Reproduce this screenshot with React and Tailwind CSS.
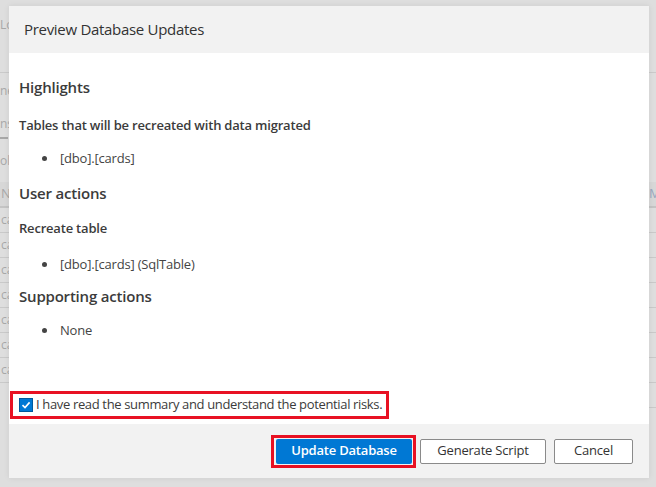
import React from "react";

const font = { fontFamily: '"Open Sans", "Noto Sans", sans-serif' };

function BgRow({ text, right }) {
  return (
    <div className="h-[25px] border-b border-[#c9c9c9] flex items-center justify-between text-[12px] text-[#a8a8a8]">
      <span className="w-[9px] overflow-hidden whitespace-nowrap pl-[1px]">{text}</span>
      <span className="w-[7px] overflow-hidden whitespace-nowrap">{right}</span>
    </div>
  );
}

export default function App() {
  return (
    <div className="relative w-[656px] h-[487px] overflow-hidden bg-[#dedede]" style={font}>
      {/* faded underlying page */}
      <div className="flex flex-col text-[#a8a8a8] text-[12px]">
        <div className="h-[73px] border-b border-[#cacaca] flex items-start pt-[16px]">
          <span className="w-[9px] overflow-hidden whitespace-nowrap">Lo</span>
        </div>
        <div className="h-[38px] flex items-center">
          <span className="w-[9px] overflow-hidden whitespace-nowrap -mt-[2px]">ne</span>
        </div>
        <div className="h-[26px] flex items-center">
          <span className="w-[9px] overflow-hidden whitespace-nowrap">ns</span>
        </div>
        <div className="h-[2px] w-[8px] bg-[#a8a8a8]"></div>
        <div className="h-[43px] flex items-center">
          <span className="w-[9px] overflow-hidden whitespace-nowrap">olu</span>
        </div>
        <div className="h-[26px] bg-[#d7d7d7] border-b-2 border-[#c4c4c4] flex items-center justify-between text-[13px]">
          <span className="w-[9px] overflow-hidden pl-[1px]">N</span>
          <span className="w-[7px] overflow-hidden whitespace-nowrap text-[#9aa8c0]">Ma</span>
        </div>
        <BgRow text="ca" />
        <BgRow text="ca" />
        <BgRow text="ca" />
        <BgRow text="ca" />
        <BgRow text="ca" />
        <BgRow text="ca" />
        <BgRow text="ca" />
        <div className="h-[25px] border-b border-[#c9c9c9] ml-[640px]"></div>
      </div>

      {/* dialog */}
      <div className="absolute left-[9px] top-[6px] w-[640px] h-[472px] bg-white flex flex-col shadow-[0_0_6px_rgba(0,0,0,0.08)]">
        <div className="h-[47px] bg-[#f2f2f2] flex items-center pl-[15px] text-[15px] text-[#333333] tracking-[-0.3px]">
          Preview Database Updates
        </div>
        <div className="flex-1 flex flex-col pl-[10px] pr-[10px] text-[#3b3b3b] tracking-[-0.2px]">
          <div className="mt-[24px] text-[15px] font-semibold leading-[20px]">Highlights</div>
          <div className="mt-[19px] text-[13px] font-semibold leading-[18px]">Tables that will be recreated with data migrated</div>
          <ul className="mt-[15px] ml-[39px] list-disc text-[13px] leading-[18px] text-[#444444]">
            <li className="pl-[2px]">[dbo].[cards]</li>
          </ul>
          <div className="mt-[16px] text-[15px] font-semibold leading-[20px]">User actions</div>
          <div className="mt-[16px] text-[13px] font-semibold leading-[18px]">Recreate table</div>
          <ul className="mt-[18px] ml-[39px] list-disc text-[13px] leading-[18px] text-[#444444]">
            <li className="pl-[2px]">[dbo].[cards] (SqlTable)</li>
          </ul>
          <div className="mt-[13px] text-[15px] font-semibold leading-[20px]">Supporting actions</div>
          <ul className="mt-[15px] ml-[39px] list-disc text-[13px] leading-[18px] text-[#444444]">
            <li className="pl-[2px]">None</li>
          </ul>
          <div className="flex-1"></div>
          <div className="mb-[5px] -ml-[9px] self-start h-[28px] border-[3px] border-[#e81123] flex items-center pl-[6px] pr-[4px] gap-[3px]">
            <span className="w-[14px] h-[14px] bg-[#0078d4] border border-[#005a9e] outline outline-1 outline-white flex items-center justify-center">
              <svg width="10" height="10" viewBox="0 0 10 10">
                <path d="M1.5 5.2 L4 7.6 L8.6 2.4" fill="none" stroke="white" strokeWidth="1.6" />
              </svg>
            </span>
            <span className="text-[13px] text-[#3b3b3b] whitespace-nowrap tracking-[-0.35px]">I have read the summary and understand the potential risks.</span>
          </div>
        </div>
        <div className="h-[54px] bg-[#f2f2f2] flex items-center justify-end pr-[16px] text-[13px] tracking-[-0.2px]">
          <div className="border-[3px] border-[#e81123] pl-[2px] pr-[1px] py-[1px]">
            <button className="w-[136px] h-[25px] bg-[#0078d4] text-white font-semibold rounded-[2px]">Update Database</button>
          </div>
          <button className="ml-[4px] w-[126px] h-[25px] bg-white border border-[#8a8a8a] text-[#333333] rounded-[2px]">Generate Script</button>
          <button className="ml-[8px] w-[79px] h-[25px] bg-white border border-[#8a8a8a] text-[#333333] rounded-[2px]">Cancel</button>
        </div>
      </div>
    </div>
  );
}
